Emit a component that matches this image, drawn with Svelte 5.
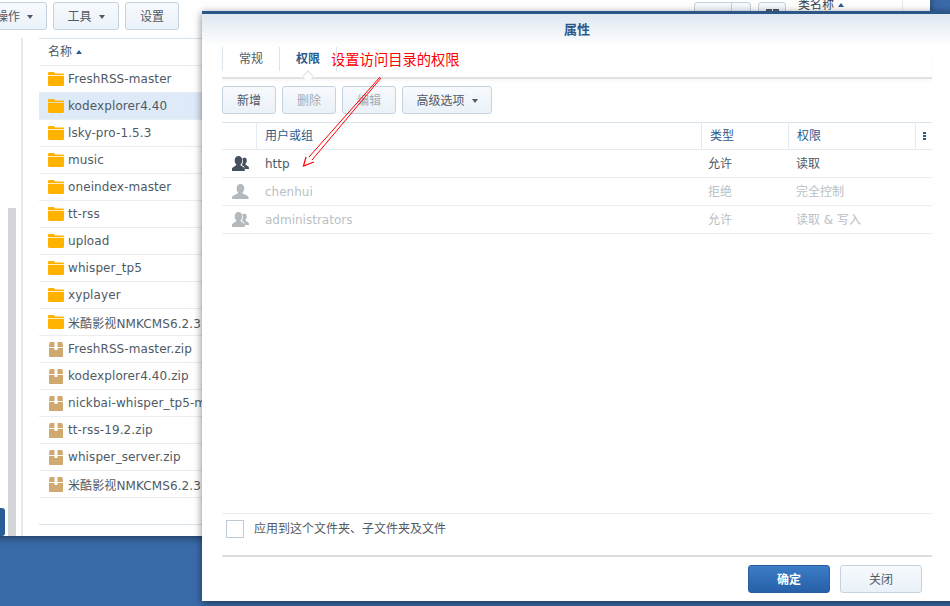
<script>
  const folders = ["FreshRSS-master", "kodexplorer4.40", "lsky-pro-1.5.3", "music", "oneindex-master", "tt-rss", "upload", "whisper_tp5", "xyplayer", "米酷影视NMKCMS6.2.3"];
  const zips = ["FreshRSS-master.zip", "kodexplorer4.40.zip", "nickbai-whisper_tp5-master.zip", "tt-rss-19.2.zip", "whisper_server.zip", "米酷影视NMKCMS6.2.3.zip"];
  const rows = [
    { name: "http", type: "允许", perm: "读取", group: true },
    { name: "chenhui", type: "拒绝", perm: "完全控制", off: true },
    { name: "administrators", type: "允许", perm: "读取 & 写入", group: true, off: true },
  ];
</script>

<div class="desktop">
  <div class="window">
    <div class="toolbar">
      <button class="btn first">操作<i class="caret"></i></button>
      <button class="btn tool">工具<i class="caret"></i></button>
      <button class="btn set">设置</button>
      <div class="spacer"></div>
      <div class="split"><span></span><span></span></div>
      <button class="btn grid"><b></b><b></b></button>
      <div class="type-head">类名称<i class="up"></i></div>
    </div>
    <div class="body">
      <div class="side">
        <div class="side-btn"></div>
        <div class="scroll"></div>
      </div>
      <div class="list">
        <div class="list-head">名称<i class="up"></i></div>
        {#each folders as f, i}
          <div class="file" class:sel={i === 1}>
            <svg width="16" height="14" viewBox="0 0 16 14"><path d="M0 2.5V1.2C0 .5.5 0 1.2 0h4.6l1.4 1.5h7.6c.6 0 1.2.5 1.2 1.2v.3H0z" fill="#ffb300"/><path d="M0 3.8h16v9c0 .7-.5 1.2-1.2 1.2H1.2C.5 14 0 13.500 0 12.800z" fill="#ffb300"/></svg>
            <span>{f}</span>
          </div>
        {/each}
        {#each zips as z}
          <div class="file">
            <svg class="zip" width="14" height="15" viewBox="0 0 14 15"><path d="M0 5h5.500V0H2C1 0 .5.500.3 1.500zM8.500 0v5H14l-.3-3.500C13.500.5 13 0 12 0z" fill="#cfa970"/><path d="M0 6h5.500v2h3V6H14v8c0 .6-.4 1-1 1H1c-.6 0-1-.4-1-1z" fill="#cfa970"/></svg>
            <span>{z}</span>
          </div>
        {/each}
        <div class="list-foot"></div>
      </div>
    </div>
  </div>

  <div class="dialog">
    <div class="title">属性</div>
    <div class="content">
      <div class="tabs">
        <div class="tab">常规</div>
        <div class="tab active">权限</div>
        <div class="note">设置访问目录的权限</div>
      </div>
      <div class="actions">
        <button class="btn act">新增</button>
        <button class="btn act dim">删除</button>
        <button class="btn act dim">编辑</button>
        <button class="btn act more">高级选项<i class="caret"></i></button>
      </div>
      <div class="thead">
        <div class="c-icon"></div>
        <div class="c-name">用户或组</div>
        <div class="c-type">类型</div>
        <div class="c-perm">权限</div>
        <div class="c-menu"><i></i><i></i><i></i></div>
      </div>
      {#each rows as r}
        <div class="row" class:off={r.off}>
          <div class="r-icon">
            <svg width="17" height="15" viewBox="0 0 17 15">
              {#if r.group}
                <path d="M12 1.500c1.700 0 2.800 1.300 2.800 3.100 0 1.300-.5 2.400-1.200 3-.3.300-.3.900 0 1.100l2.400 1.500c.6.400 1 .8 1 1.500V13h-4.500v-1c0-1-.5-1.700-1.400-2.200l-1.500-.9c.9-1 1.400-2.500 1.400-4 0-1-.2-1.800-.7-2.500.4-.3 1-.4 1.700-.4z" />
              {/if}
              <path d={r.group ? "M6.500 0c2.300 0 3.800 1.700 3.800 4.200 0 1.800-.7 3.300-1.600 4.100-.4.400-.3 1 .2 1.300l2.800 1.700c.8.500 1.100 1 1.100 1.700V15H0v-2c0-.7.300-1.200 1.100-1.700l2.800-1.700c.5-.3.600-.9.200-1.300C3.200 7.500 2.700 6 2.700 4.200 2.700 1.700 4.200 0 6.500 0z" : "M8.500 0c2.300 0 3.800 1.700 3.800 4.200 0 1.800-.7 3.300-1.600 4.100-.4.400-.3 1 .2 1.300l4 1.900c1 .5 1.600 1 1.600 1.700V15H0v-1.800c0-.7.600-1.200 1.600-1.700l4-1.900c.5-.3.600-.9.200-1.300C4.900 7.500 4.700 6 4.700 4.200 4.700 1.700 6.200 0 8.500 0z"} />
            </svg>
          </div>
          <div class="c-name">{r.name}</div>
          <div class="c-type">{r.type}</div>
          <div class="c-perm">{r.perm}</div>
        </div>
      {/each}
      <div class="fill"></div>
      <label class="apply"><span class="box"></span>应用到这个文件夹、子文件夹及文件</label>
      <div class="footer">
        <button class="btn ok">确定</button>
        <button class="btn close">关闭</button>
      </div>
    </div>
    <svg class="arrow" width="90" height="104" viewBox="0 0 90 104">
      <path d="M80 7 9 87M81 8 12 90" stroke="#f00" stroke-width="1" fill="none"/>
      <path d="M6 87 3.500 96 14 92" stroke="#f00" stroke-width="1.200" fill="#fff"/>
    </svg>
  </div>
</div>

<style>
  :global(body) {
    margin: 0;
  }

  .desktop {
    position: relative;
    width: 950px;
    height: 606px;
    overflow: hidden;
    background: #3a6ba9;
    font-family: "DejaVu Sans", "Noto Sans CJK SC", sans-serif;
    font-size: 12px;
    color: #505a64;
  }

  .btn {
    height: 28px;
    padding: 0 0 2px;
    box-sizing: border-box;
    border: 1px solid #c5d3e0;
    border-radius: 3px;
    background: linear-gradient(#f7fafd, #eaf1f8);
    font: inherit;
    color: #505a64;
  }

  .caret {
    display: inline-block;
    margin-left: 7px;
    vertical-align: 2px;
    border: 3.500px solid transparent;
    border-top: 4px solid #505a64;
    border-bottom: 0;
  }

  .up {
    display: inline-block;
    margin-left: 4px;
    vertical-align: 2px;
    border: 3.500px solid transparent;
    border-bottom: 4px solid #2b5a8e;
    border-top: 0;
  }

  /* back window */
  .window {
    position: absolute;
    left: -10px;
    top: -28px;
    width: 940px;
    height: 564px;
    background: #fff;
    box-shadow: 0 2px 8px rgba(0, 0, 0, 0.45);
    display: flex;
    flex-direction: column;
  }

  .toolbar {
    height: 66px;
    padding-top: 30px;
    box-sizing: border-box;
    display: flex;
    align-items: flex-start;
    flex: none;
  }

  .first {
    width: 57px;
    text-align: right;
    padding-right: 13px;
  }

  .tool {
    width: 66px;
    margin-left: 6px;
  }

  .set {
    width: 54px;
    margin-left: 6px;
  }

  .spacer {
    flex: 1;
  }

  .split {
    width: 57px;
    height: 28px;
    box-sizing: border-box;
    display: flex;
    border: 1px solid #c5d3e0;
    border-radius: 3px;
    background: linear-gradient(#f7fafd, #eaf1f8);
  }

  .split span {
    flex: 1;
  }

  .split span:first-child {
    flex: 0 0 36px;
    border-right: 1px solid #c5d3e0;
  }

  .grid {
    width: 28px;
    margin-left: 7px;
    display: flex;
    justify-content: center;
    gap: 1px;
    padding-top: 6px;
  }

  .grid b {
    width: 6px;
    height: 6px;
    background: #505a64;
  }

  .type-head {
    width: 105px;
    margin-left: 12px;
    height: 42px;
    margin-top: -10px;
    line-height: 27px;
    border-right: 1px solid #e4ebf2;
    box-sizing: border-box;
    margin-right: 27px;
    color: #3a4652;
  }

  .body {
    flex: 1;
    display: flex;
    min-height: 0;
  }

  .side {
    width: 33px;
    position: relative;
    flex: none;
    box-sizing: border-box;
    border-right: 2px solid #e8ebee;
    padding-left: 18px;
    display: flex;
    align-items: flex-end;
  }

  .side-btn {
    position: absolute;
    left: 0;
    bottom: 0;
    width: 15px;
    height: 28px;
    border-radius: 0 3px 3px 0;
    background: #2a5d98;
  }

  .scroll {
    width: 8px;
    height: 328px;
    background: #d3d5d8;
  }

  .list {
    flex: 1;
    border-top: 1px solid #d9e3ec;
    margin-left: 16px;
  }

  .list-head {
    height: 26px;
    line-height: 26px;
    padding-left: 9px;
    border-bottom: 1px solid #e9eef3;
    color: #4a5a6a;
  }

  .file {
    height: 26px;
    display: flex;
    align-items: center;
    padding-left: 9px;
    border-bottom: 1px solid #e9eef3;
    white-space: nowrap;
    overflow: hidden;
    letter-spacing: 0.1px;
  }

  .file.sel {
    background: #deeaf8;
  }

  .file svg {
    flex: none;
    margin-right: 4px;
  }

  .file svg.zip {
    margin-left: 1px;
    margin-right: 5px;
  }

  .list-foot {
    height: 26px;
    border-bottom: 1px solid #d9e3ec;
  }

  /* properties dialog */
  .dialog {
    position: absolute;
    left: 202px;
    top: 11px;
    width: 760px;
    height: 590px;
    box-sizing: border-box;
    border-top: 3px solid #2a5688;
    background: #fff;
    box-shadow: 0 2px 8px rgba(0, 0, 0, 0.5);
    display: flex;
    flex-direction: column;
  }

  .title {
    position: relative;
    height: 33px;
    flex: none;
    padding-right: 10px;
    text-align: center;
    line-height: 32px;
    font-size: 13px;
    font-weight: bold;
    color: #2b5a8e;
    background: linear-gradient(#dfe7f0, #fff);
  }

  .content {
    flex: 1;
    width: 710px;
    margin-left: 20px;
    display: flex;
    flex-direction: column;
  }

  .tabs {
    height: 30px;
    flex: none;
    display: flex;
    border-bottom: 2px solid #e0e2e4;
    box-shadow: 0 2px 3px rgba(0, 0, 0, 0.03);
  }

  .tab {
    position: relative;
    width: 56px;
    height: 24px;
    border-left: 1px solid #dde5ec;
    text-align: center;
    line-height: 24px;
  }

  .tab.active {
    font-weight: bold;
    color: #2b5a8e;
    border-right: 1px solid #dde5ec;
  }

  .tab.active::after {
    content: "";
    position: absolute;
    left: 24px;
    top: 25px;
    width: 7px;
    height: 7px;
    background: #fff;
    border-left: 1px solid #dcdfe2;
    border-top: 1px solid #dcdfe2;
    transform: rotate(45deg);
  }

  .note {
    margin-left: -6px;
    font-size: 14.300px;
    line-height: 26px;
    color: #f00;
  }

  .actions {
    display: flex;
    gap: 6px;
    margin-top: 7px;
    flex: none;
  }

  .act {
    width: 54px;
  }

  .dim {
    color: #a4acb4;
  }

  .more {
    width: 90px;
  }

  .thead {
    display: flex;
    height: 28px;
    box-sizing: border-box;
    margin-top: 8px;
    flex: none;
    align-items: center;
    border-top: 1px solid #d9e3ec;
    border-bottom: 1px solid #e4ebf2;
    color: #2b5a8e;
  }

  .thead .c-icon {
    width: 35px;
  }

  .r-icon {
    width: 34px;
    flex: none;
  }

  .c-name {
    flex: 1;
    padding-left: 8px;
  }

  .row .c-name {
    padding-left: 9px;
  }

  .c-type {
    width: 87px;
    padding-left: 8px;
    box-sizing: border-box;
    flex: none;
  }

  .c-perm {
    width: 127px;
    padding-left: 8px;
    box-sizing: border-box;
    flex: none;
  }

  .c-menu {
    width: 16px;
    flex: none;
    box-sizing: border-box;
    padding-left: 7px;
    display: flex;
    flex-direction: column;
    gap: 1px;
  }

  .c-menu i {
    width: 3px;
    height: 2px;
    background: #2b5a8e;
  }

  .thead > div {
    height: 100%;
    line-height: 26px;
    border-right: 1px solid #e4ebf2;
    box-sizing: border-box;
  }

  .thead > .c-menu {
    border-right: 0;
    justify-content: center;
  }

  .row {
    display: flex;
    height: 28px;
    box-sizing: border-box;
    flex: none;
    align-items: center;
    border-bottom: 1px solid #e9eef3;
  }

  .row .c-type {
    padding-left: 7px;
    padding-bottom: 2px;
  }

  .row .c-perm {
    width: 144px;
    padding-bottom: 2px;
  }

  .r-icon {
    padding-left: 10px;
    box-sizing: border-box;
    height: 15px;
    fill: #46505c;
  }

  .r-icon svg {
    display: block;
  }

  .row.off {
    color: #b9bfc5;
  }

  .row.off .r-icon {
    fill: #b4b9be;
  }

  .fill {
    flex: 1;
  }

  .apply {
    height: 44px;
    flex: none;
    box-sizing: border-box;
    border-top: 1px solid #e9eef3;
    border-bottom: 2px solid #dcdfe2;
    display: flex;
    align-items: flex-start;
    padding: 6px 0 0 4px;
    line-height: 18px;
  }

  .box {
    width: 18px;
    height: 18px;
    box-sizing: border-box;
    border: 1px solid #c0cad6;
    margin-right: 10px;
  }

  .footer {
    height: 44px;
    flex: none;
    display: flex;
    justify-content: flex-end;
    gap: 10px;
    padding-top: 8px;
    padding-right: 10px;
    box-sizing: border-box;
  }

  .ok,
  .close {
    width: 82px;
  }

  .ok {
    border-color: #2a5f9f;
    background: linear-gradient(#3c7cc6, #2660a8);
    color: #fff;
    font-weight: bold;
  }

  .arrow {
    position: absolute;
    left: 98px;
    top: 56px;
    pointer-events: none;
  }
</style>
